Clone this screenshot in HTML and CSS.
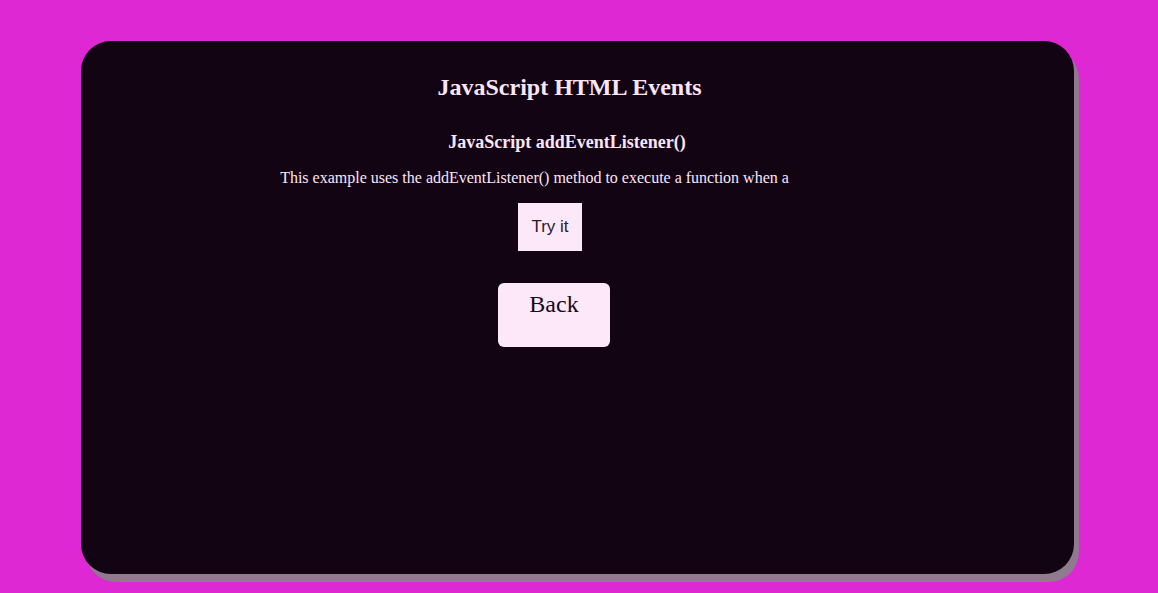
FILE: index.html
```html
<!DOCTYPE html>
<html>
<head>
<meta charset="utf-8">
<link rel="stylesheet" href="styles.css">
</head>
<body>
<main class="card">
  <h2 class="title">JavaScript HTML Events</h2>
  <h3 class="subtitle">JavaScript addEventListener()</h3>
  <p class="desc">This example uses the addEventListener() method to execute a function when a</p>
  <button class="try">Try it</button>
  <button class="back">Back</button>
</main>
</body>
</html>
```
FILE: styles.css
```css
html, body {
  margin: 0;
  padding: 0;
  background: #dd28d3;
  height: 100%;
  overflow: hidden;
}
body {
  font-family: "Liberation Serif", serif;
  color: #fbe6f8;
  padding-top: 41px;
  box-sizing: border-box;
}
.card {
  box-sizing: border-box;
  width: 993px;
  height: 533px;
  margin-left: 81px;
  background: #130414;
  border-radius: 30px;
  box-shadow: 5px 8px 0 #8f7a8e;
  display: flex;
  flex-direction: column;
  align-items: center;
  padding-top: 34px;
}
.title {
  margin: 0 16px 0 0;
  font-size: 24px;
  font-weight: bold;
  line-height: 1;
}
.subtitle {
  margin: 34px 21px 0 0;
  font-size: 18px;
  font-weight: bold;
  line-height: 1;
}
.desc {
  margin: 19px 86px 0 0;
  font-size: 16px;
  line-height: 1;
}
.try {
  margin: 17px 55px 0 0;
  width: 64px;
  height: 48px;
  border: none;
  border-radius: 0;
  background: #fce8f8;
  color: #2a1a2a;
  font-family: "Liberation Sans", sans-serif;
  font-size: 17px;
  padding: 0;
}
.back {
  margin: 32px 47px 0 0;
  width: 112px;
  height: 64px;
  border: none;
  border-radius: 6px;
  background: #fce8f8;
  color: #1a0a1a;
  font-family: "Liberation Serif", serif;
  font-size: 24px;
  padding: 8px 0 0;
  display: flex;
  justify-content: center;
  align-items: flex-start;
}
```
